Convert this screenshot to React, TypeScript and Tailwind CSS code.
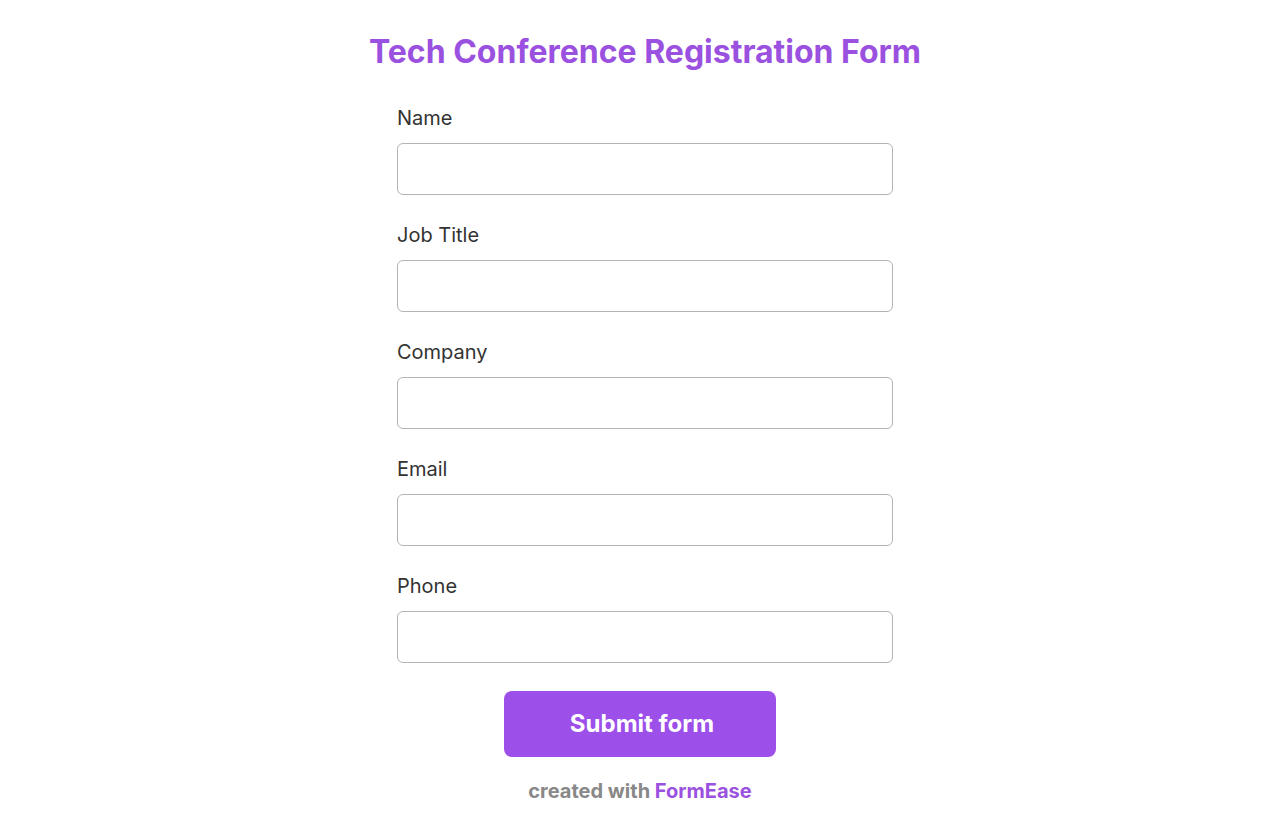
import React from "react";

const fields = ["Name", "Job Title", "Company", "Email", "Phone"];

export default function App() {
  return (
    <div
      className="min-h-[832px] w-full bg-white flex flex-col items-center pt-[34px]"
      style={{ fontFamily: "Inter, 'Noto Sans', sans-serif" }}
    >
      <div className="flex flex-col items-center pl-[10px]">
        <h1 className="text-[32px] leading-[36px] font-bold text-[#9b51e0]">
          Tech Conference Registration Form
        </h1>
        <div className="w-[496px] mt-[34px] flex flex-col gap-[26px]">
          {fields.map((f) => (
            <div key={f} className="flex flex-col gap-[11px]">
              <label className="text-[20px] leading-[28px] text-[#333333]">{f}</label>
              <input
                type="text"
                className="h-[52px] w-full rounded-[6px] border border-[#b3b3b3] bg-white px-3 outline-none"
              />
            </div>
          ))}
        </div>
      </div>
      <button className="mt-[28px] w-[272px] h-[66px] rounded-[8px] bg-[#9d4fea] text-white text-[24px] font-bold pl-[4px]">
        Submit form
      </button>
      <div className="mt-[20px] text-[20px] leading-[28px] font-bold text-[#888888]">
        created with <span className="text-[#9b51e0]">FormEase</span>
      </div>
    </div>
  );
}
